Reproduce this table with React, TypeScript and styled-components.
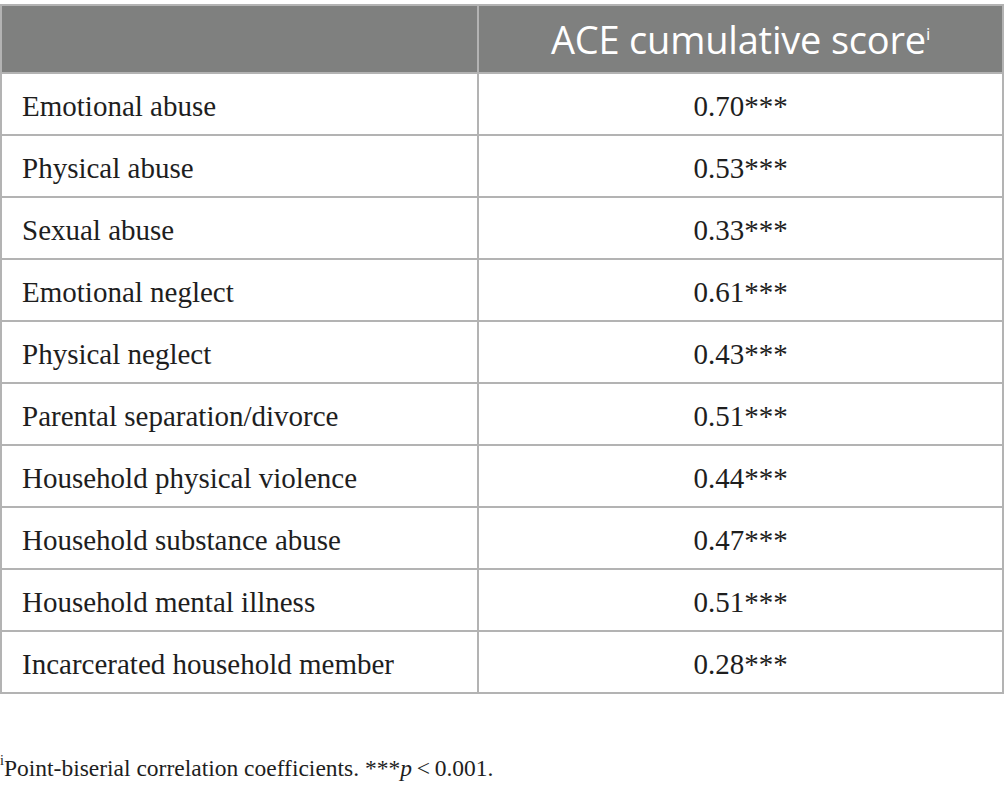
import React from "react";
import styled, { createGlobalStyle } from "styled-components";

const Global = createGlobalStyle`
  html, body { margin: 0; padding: 0; background: #fff; }
`;

const Page = styled.div`
  width: 1005px;
  padding-top: 4px;
  box-sizing: border-box;
`;

const Table = styled.table`
  width: 1004px;
  border-collapse: collapse;
  table-layout: fixed;
`;

const HeadCell = styled.th`
  background: #7f807f;
  color: #fff;
  height: 66px;
  padding: 0;
  border: 2px solid #b3b3b3;
  font-family: "Open Sans", sans-serif;
  font-weight: 400;
  font-size: 38px;
  letter-spacing: -0.2px;
  text-align: center;
  vertical-align: middle;
`;

const Sup = styled.sup<{ $size?: string }>`
  font-size: ${(p) => p.$size ?? "0.45em"};
  vertical-align: 0.8em;
  line-height: 0;
`;

const Cell = styled.td<{ $center?: boolean }>`
  height: 62px;
  padding: 4px 0 0 ${(p) => (p.$center ? "0" : "20px")};
  box-sizing: border-box;
  border: 2px solid #b3b3b3;
  font-family: "Liberation Serif", "Times New Roman", serif;
  font-size: 29px;
  color: #1e1e1e;
  text-align: ${(p) => (p.$center ? "center" : "left")};
  vertical-align: middle;
`;

const Footnote = styled.p`
  margin: 61px 0 0 0;
  font-family: "Liberation Serif", "Times New Roman", serif;
  font-size: 23.5px;
  color: #1e1e1e;
`;

const rows: [string, string][] = [
  ["Emotional abuse", "0.70"],
  ["Physical abuse", "0.53"],
  ["Sexual abuse", "0.33"],
  ["Emotional neglect", "0.61"],
  ["Physical neglect", "0.43"],
  ["Parental separation/divorce", "0.51"],
  ["Household physical violence", "0.44"],
  ["Household substance abuse", "0.47"],
  ["Household mental illness", "0.51"],
  ["Incarcerated household member", "0.28"],
];

export default function App() {
  return (
    <Page>
      <Global />
      <Table>
        <colgroup>
          <col style={{ width: 477 }} />
          <col />
        </colgroup>
        <thead>
          <tr>
            <HeadCell />
            <HeadCell>
              ACE cumulative score<Sup>i</Sup>
            </HeadCell>
          </tr>
        </thead>
        <tbody>
          {rows.map(([label, v]) => (
            <tr key={label}>
              <Cell>{label}</Cell>
              <Cell $center>{v}***</Cell>
            </tr>
          ))}
        </tbody>
      </Table>
      <Footnote>
        <Sup $size="0.6em">i</Sup>Point-biserial correlation coefficients. ***<i>p</i>&thinsp;&lt;&thinsp;0.001.
      </Footnote>
    </Page>
  );
}
